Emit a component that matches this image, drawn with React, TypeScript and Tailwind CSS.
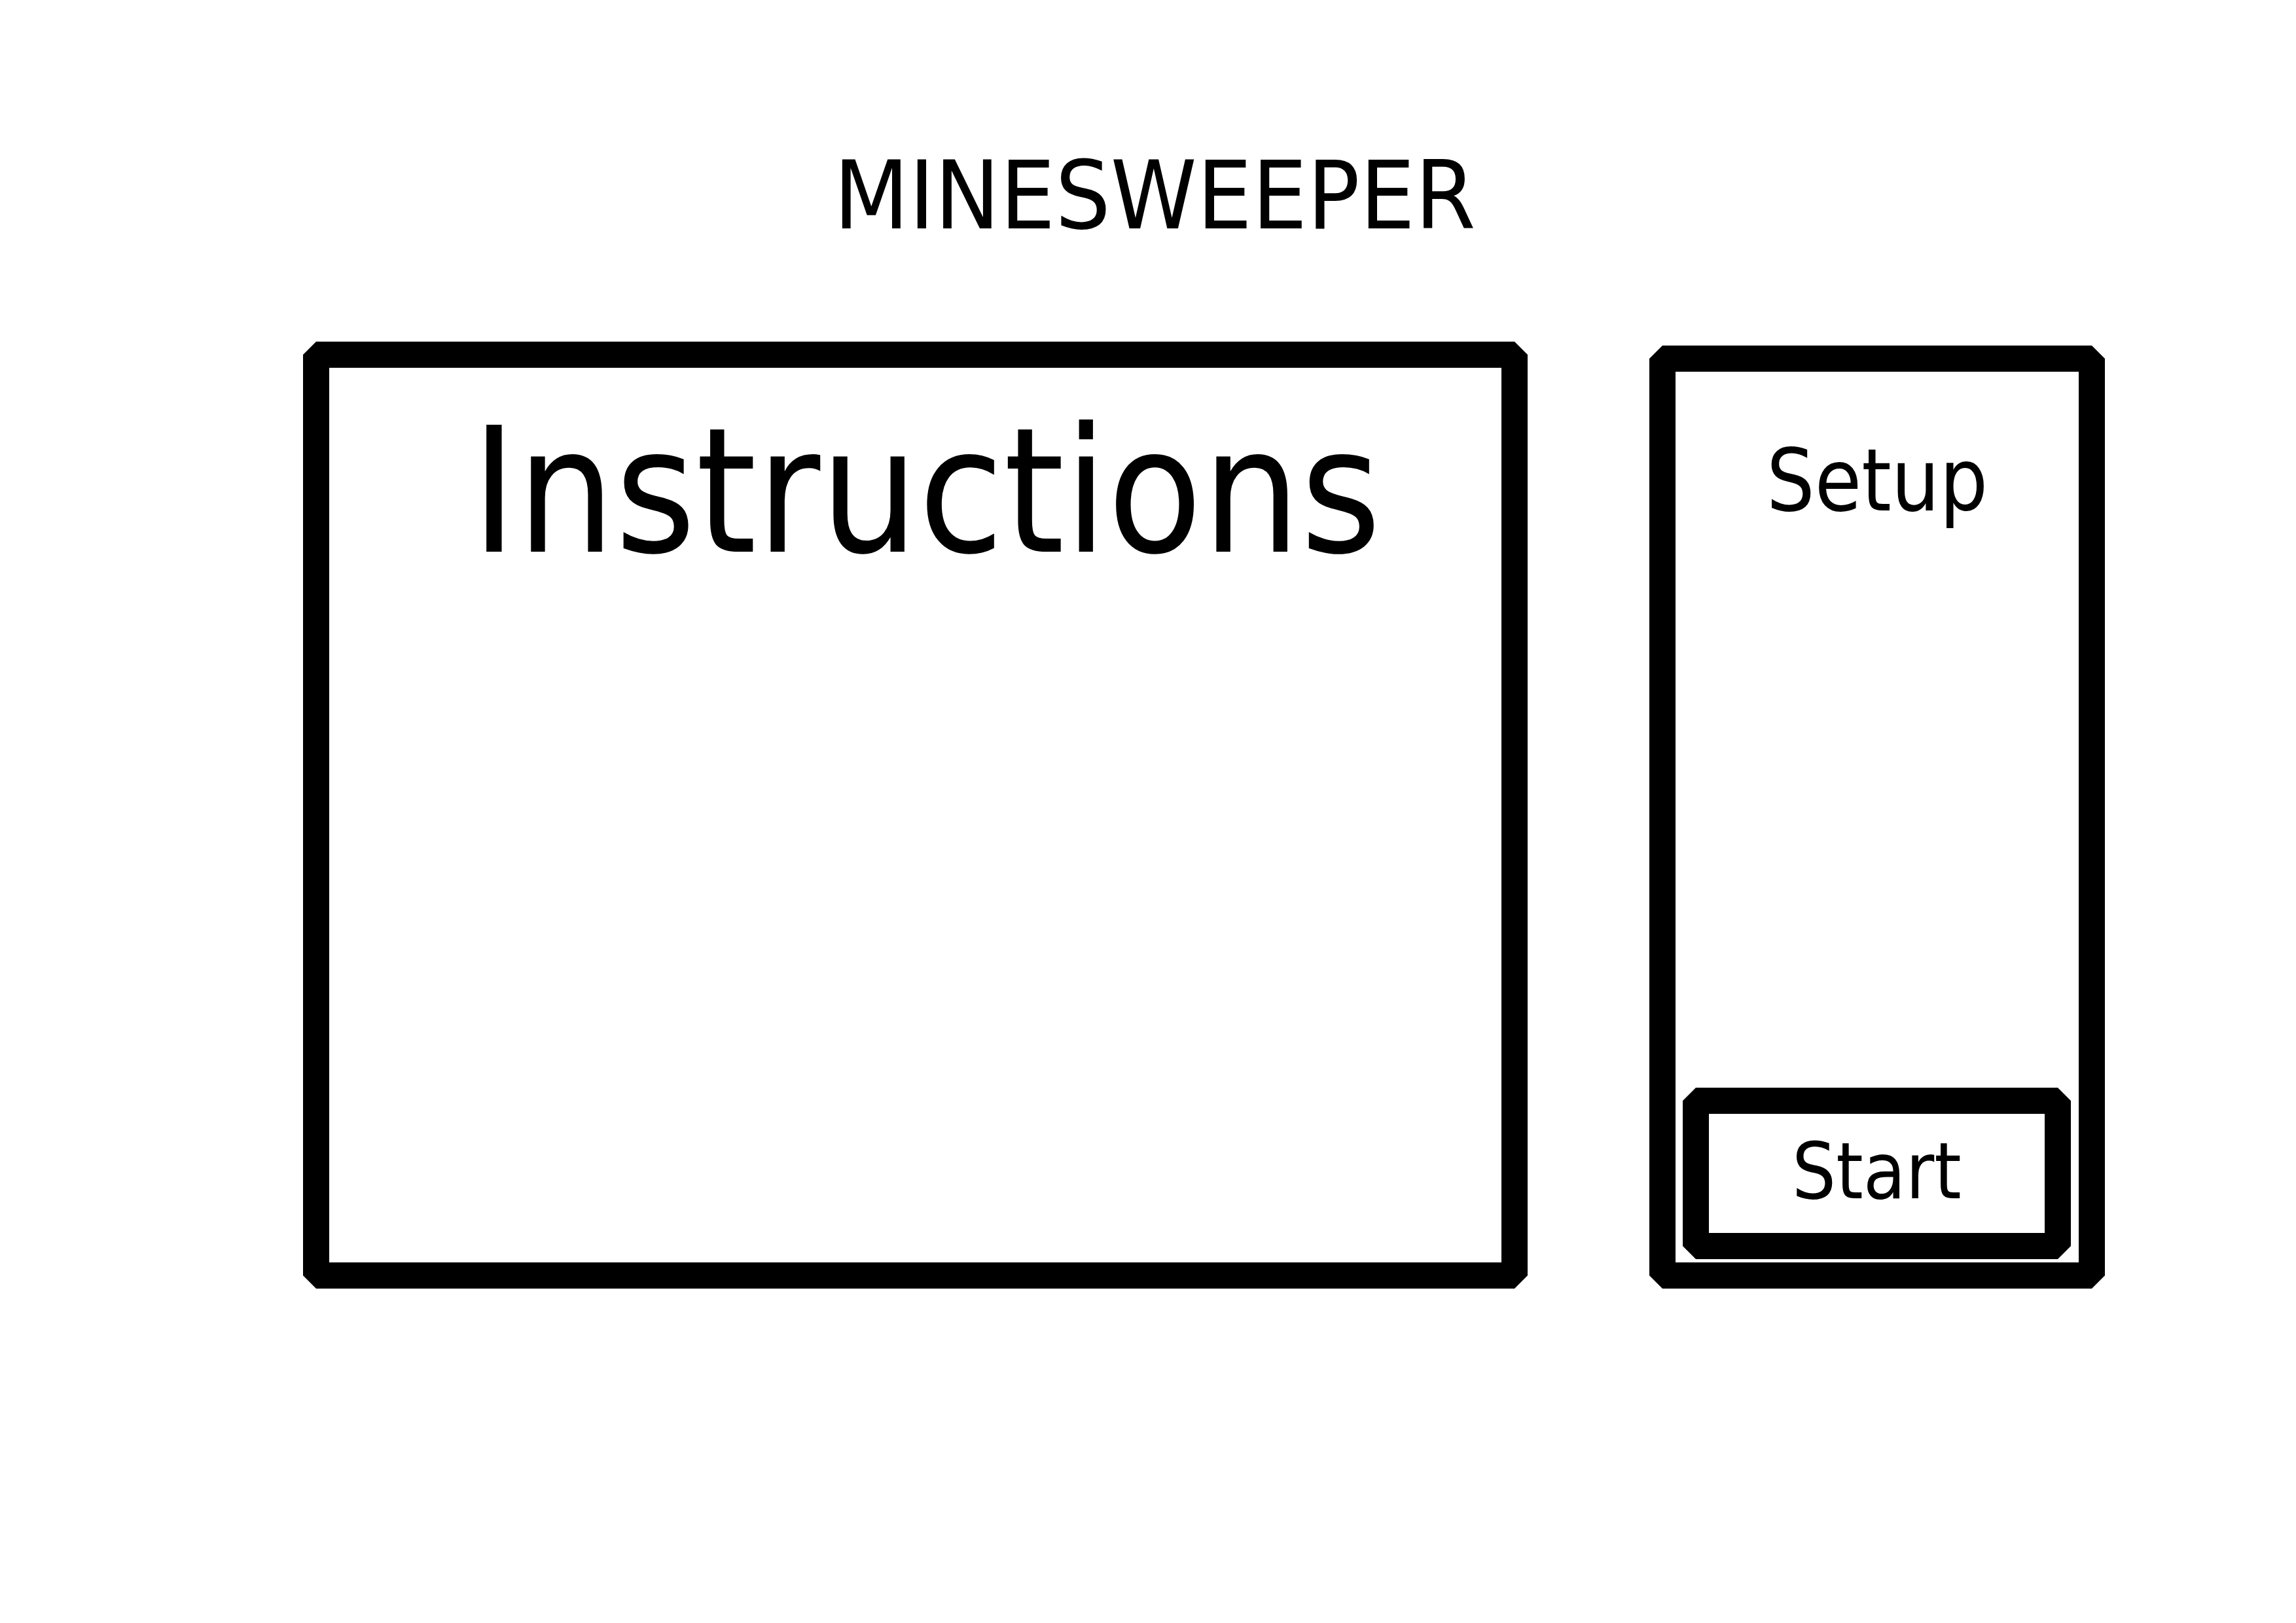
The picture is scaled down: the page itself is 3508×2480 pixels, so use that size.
const chamfer =
  "[clip-path:polygon(20px_0,calc(100%_-_20px)_0,100%_20px,100%_calc(100%_-_20px),calc(100%_-_20px)_100%,20px_100%,0_calc(100%_-_20px),0_20px)]";

const App = () => {
  return (
    <div className="w-[3508px] h-[2480px] bg-white text-black font-['DejaVu_Sans',sans-serif] overflow-hidden">
      <div className="flex justify-center pt-[226px] pl-[20px]">
        <h1 className="inline-block scale-x-[0.92] text-[145px] leading-none font-normal">
          MINESWEEPER
        </h1>
      </div>

      <div className="flex items-end pt-[151px] pl-[463px]">
        {/* instructions panel */}
        <div className={`w-[1871px] h-[1447px] bg-black p-[40px] ${chamfer}`}>
          <div className="h-full bg-white flex justify-center pt-[56px] pl-[34px]">
            <span className="inline-block h-fit scale-x-[0.89] text-[266px] leading-none">
              Instructions
            </span>
          </div>
        </div>

        {/* setup panel */}
        <div className={`ml-[186px] w-[696px] h-[1441px] bg-black p-[40px] ${chamfer}`}>
          <div className="h-full bg-white flex flex-col">
            <div className="flex justify-center pt-[100px]">
              <span className="inline-block scale-x-[0.88] text-[132px] leading-none">
                Setup
              </span>
            </div>
            <button
              className={`mt-auto ml-[11px] mr-[12px] mb-[5px] bg-black p-[40px] ${chamfer}`}
            >
              <div className="h-[182px] bg-white flex justify-center pt-[29px]">
                <span className="inline-block h-fit scale-x-[0.89] text-[119px] leading-none">
                  Start
                </span>
              </div>
            </button>
          </div>
        </div>
      </div>
    </div>
  );
};

export default App;
